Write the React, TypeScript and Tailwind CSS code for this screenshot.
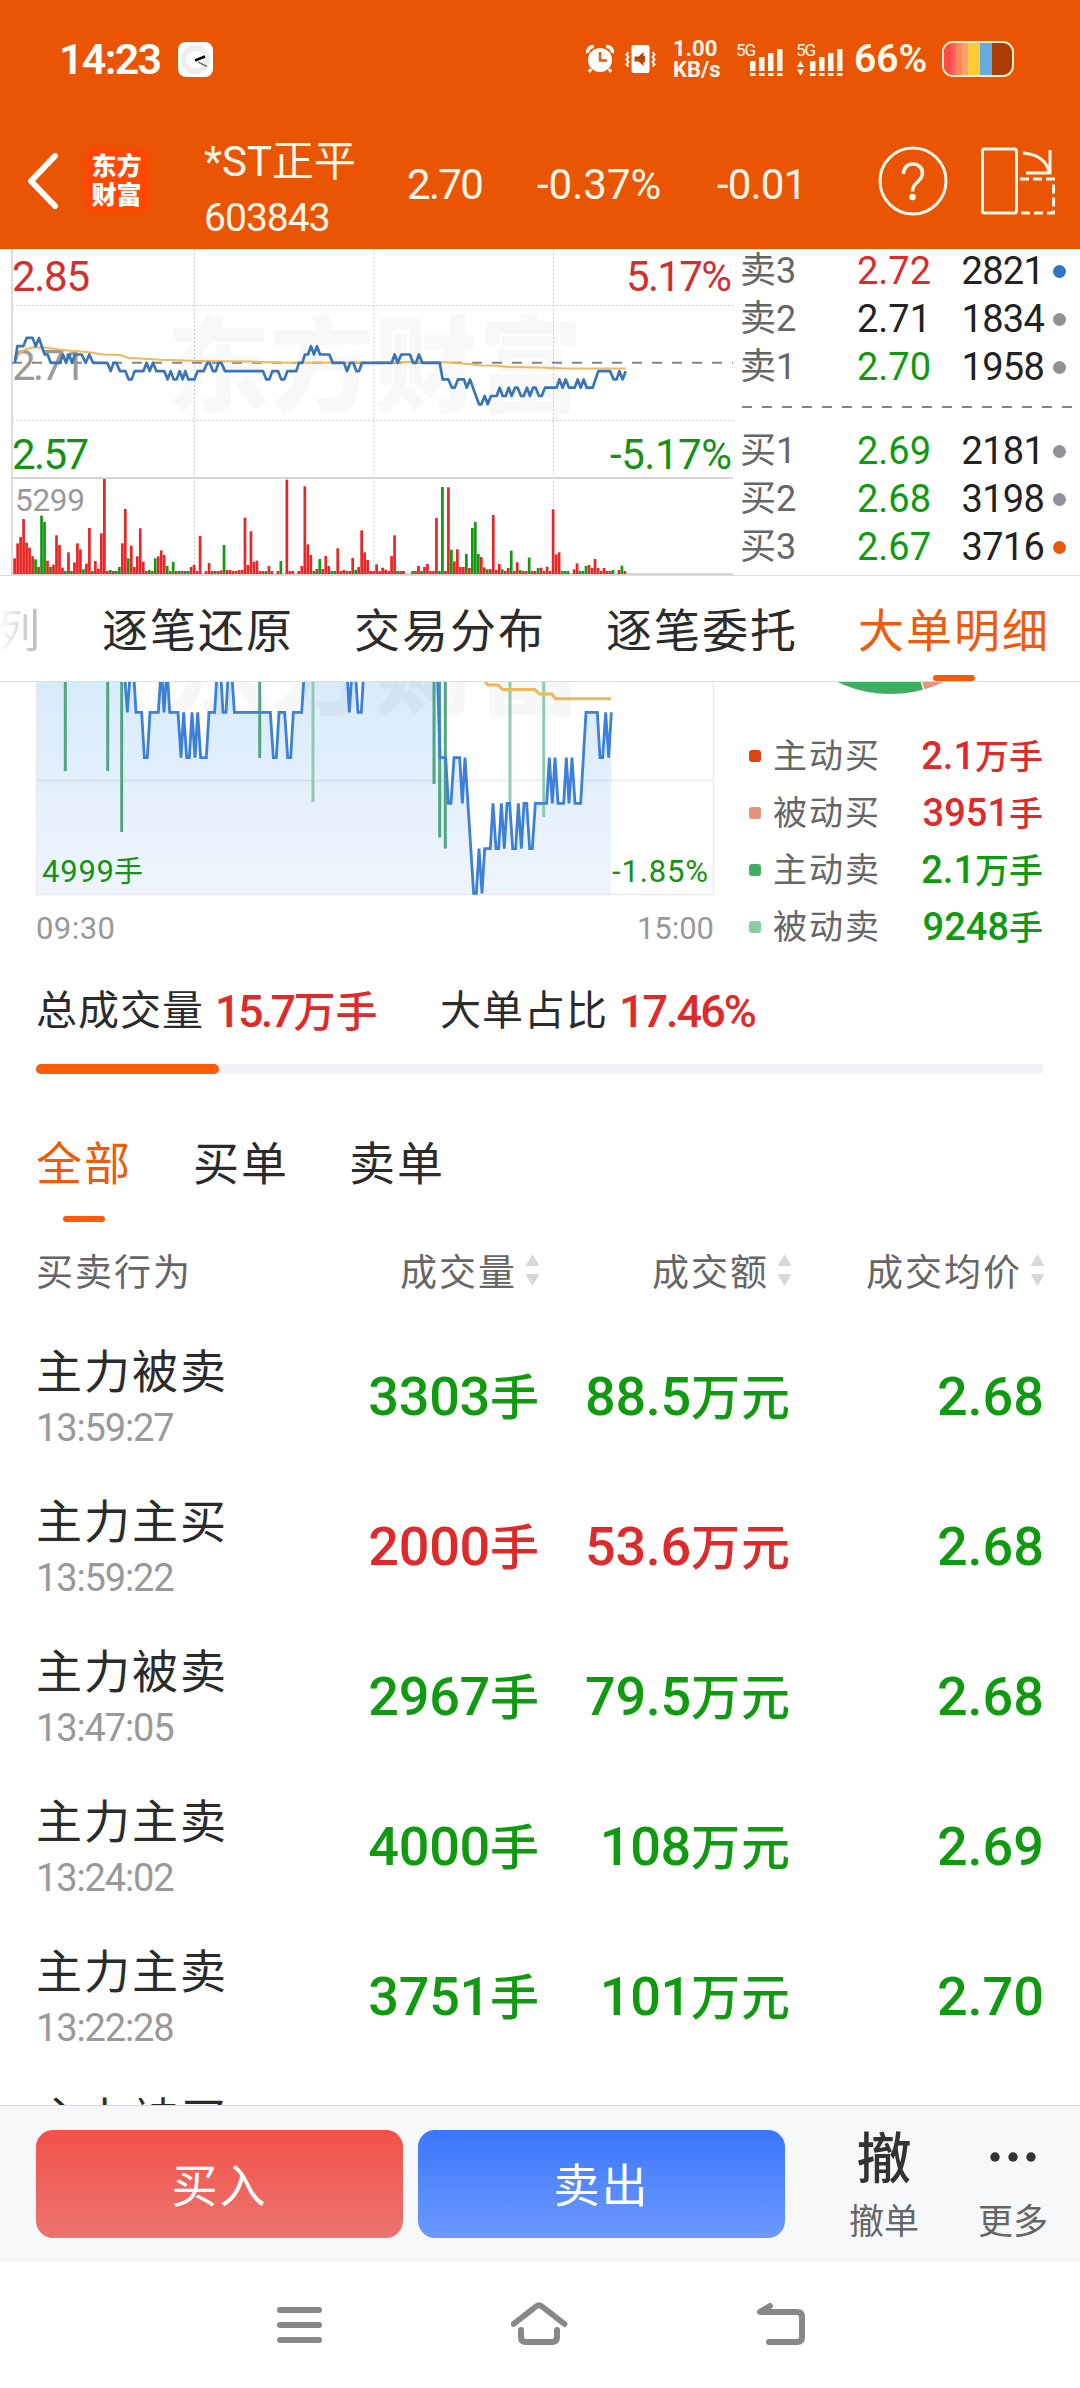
import { clsx } from 'clsx'

type Tone = 'up' | 'down' | 'flat'

const toneText: Record<Tone, string> = {
  up: 'text-[#de2a2a]',
  down: 'text-[#0f9a0f]',
  flat: 'text-[#222]',
}

interface Quote {
  label: string
  price: string
  volume: string
  tone: Tone
  dot: string
}

const asks: Quote[] = [
  { label: '卖3', price: '2.72', volume: '2821', tone: 'up', dot: 'bg-[#3573c0]' },
  { label: '卖2', price: '2.71', volume: '1834', tone: 'flat', dot: 'bg-[#919197]' },
  { label: '卖1', price: '2.70', volume: '1958', tone: 'down', dot: 'bg-[#919197]' },
]

const bids: Quote[] = [
  { label: '买1', price: '2.69', volume: '2181', tone: 'down', dot: 'bg-[#919197]' },
  { label: '买2', price: '2.68', volume: '3198', tone: 'down', dot: 'bg-[#919197]' },
  { label: '买3', price: '2.67', volume: '3716', tone: 'down', dot: 'bg-[#e85a0c]' },
]

const legend = [
  { label: '主动买', value: '2.1', unit: '万手', tone: 'up' as Tone, dot: 'bg-[#df4415]' },
  { label: '被动买', value: '3951', unit: '手', tone: 'up' as Tone, dot: 'bg-[#e9917a]' },
  { label: '主动卖', value: '2.1', unit: '万手', tone: 'down' as Tone, dot: 'bg-[#40ae63]' },
  { label: '被动卖', value: '9248', unit: '手', tone: 'down' as Tone, dot: 'bg-[#8bcda3]' },
]

const orders = [
  { name: '主力被卖', time: '13:59:27', volume: '3303', amount: '88.5', price: '2.68', tone: 'down' as Tone },
  { name: '主力主买', time: '13:59:22', volume: '2000', amount: '53.6', price: '2.68', tone: 'up' as Tone },
  { name: '主力被卖', time: '13:47:05', volume: '2967', amount: '79.5', price: '2.68', tone: 'down' as Tone },
  { name: '主力主卖', time: '13:24:02', volume: '4000', amount: '108', price: '2.69', tone: 'down' as Tone },
  { name: '主力主卖', time: '13:22:28', volume: '3751', amount: '101', price: '2.70', tone: 'down' as Tone },
]

// x in thirds of a pixel, level in ticks of 0.01 from the previous close
const priceTicks =
  '45,0 52,2 70,2 80,3 98,3 107,2 117,3 125,2 134,1 143,1 152,0 180,0 189,1 198,0 207,1 216,0 225,1 245,1 257,0 268,1 279,0 322,0 332,-1 341,0 349,0 360,-1 376,-1 386,-2 395,-2 404,-1 430,-1 440,0 449,-1 459,0 469,-1 493,-1 503,-2 512,-1 521,-2 530,-2 539,-1 548,-2 556,-1 565,-2 583,-2 593,-1 611,-1 622,0 629,0 639,-1 647,-1 656,0 664,0 675,-1 789,-1 799,-2 808,-2 817,-1 834,-1 844,-2 853,-2 862,-1 889,-1 897,0 907,0 915,1 924,1 933,2 942,1 951,2 960,1 988,1 998,0 1032,0 1041,-1 1051,0 1060,0 1069,-1 1077,-1 1086,0 1175,0 1184,1 1193,0 1204,1 1230,1 1239,0 1248,0 1257,1 1267,0 1319,0 1328,-2 1345,-2 1356,-3 1364,-3 1374,-2 1392,-2 1400,-3 1410,-2 1437,-5 1444,-5 1454,-4 1463,-5 1473,-4 1490,-4 1499,-3 1508,-4 1517,-4 1526,-3 1535,-4 1545,-3 1553,-3 1563,-4 1571,-4 1581,-3 1590,-4 1599,-3 1607,-3 1617,-4 1625,-4 1635,-3 1670,-3 1678,-2 1688,-3 1697,-2 1707,-3 1724,-3 1733,-2 1742,-3 1751,-2 1760,-3 1778,-3 1795,-1 1830,-1 1841,-2 1850,-2 1858,-1 1868,-2 1877,-1'

const pricePoints = priceTicks
  .split(' ')
  .map(p => {
    const [x, level] = p.split(',').map(Number)
    return `${x / 3},${362.8 - level * 8.3}`
  })
  .join(' ')

const averagePoints =
  '15,360 20,353 25,349.5 33,347.3 47,347.7 67,350.5 87,352 103,354.5 120,355 128,357.8 160,359.7 200,361 248,361.5 287,362.7 370,362.5 413,362 442,362 457,363.3 470,364 480,365.4 498,365.7 507,367 540,367.4 567,368.6 626,368.6'

// one entry per minute: bar height and colour
const volumeBars =
  '47r 92r 111r 165r 94r 79r 53r 44g 21r 175g 156g 40r 21g 28r 116r 87r 19r 9g 65r 9g 35r 92r 74r 14g 31r 138r 9g 39r 16r 122r 285r 9r 12g 9r 9g 21g 92r 195r 47g 85r 21r 53r 137r 37r 9r 12g 9r 47g 53r 71r 57r 24g 9r 36g 9r 9g 9r 9g 9g 21r 28r 9r 114r 0r 9r 33r 9r 9g 9r 11r 87g 12r 12r 9r 9r 12r 12r 169r 27r 128r 37r 40r 9r 9r 9g 24r 9r 0r 9r 39g 0r 283r 9r 9r 0r 9r 24r 263r 89r 57r 9g 15r 45g 15r 54r 24r 9g 9g 77r 9r 12r 9g 9r 48r 12g 21r 131r 65r 42r 9r 9r 29r 9r 19r 13r 9r 54r 116r 9g 9r 9r 0r 0r 9g 9r 24r 9g 21r 30r 9r 9r 168r 9g 261g 9r 260r 73g 38r 74r 21r 21r 60g 18r 138g 156g 60g 51r 20r 14g 15r 177r 12r 30r 14g 9r 18r 70g 9r 35r 12g 9r 9r 49g 9r 9r 18g 19r 9r 22r 9r 194r 59r 65r 9g 9g 9g 0r 14r 32r 9g 9g 24g 27r 18r 45r 18r 9r 18r 9r 9r 12g 0r 12r 25g 9r'

const bars = volumeBars.split(' ').map((b, i) => ({
  x: (44 + i * 8.975) / 3,
  h: parseInt(b, 10) / 3,
  color: b.endsWith('g') ? '#0f9a0f' : '#ea2525',
}))

// lower chart, same x unit, y in thirds of a pixel below 570
const bigOrderTicks =
  '110,150 340,150 372,290 382,427 392,290 400,290 408,427 425,427 433,563 442,563 450,427 475,427 484,290 492,427 501,290 509,427 534,427 543,563 551,427 560,563 568,563 576,427 585,563 593,427 602,563 619,563 627,427 644,427 652,290 661,290 669,427 678,427 686,290 694,290 703,427 811,427 820,563 829,563 837,427 854,427 863,563 872,563 880,427 905,427 914,290 925,150 1020,150 1040,290 1048,427 1057,290 1065,290 1074,427 1084,427 1092,290 1110,150 1290,150 1312,290 1320,563 1337,563 1345,700 1353,700 1362,563 1379,563 1387,700 1395,563 1421,970 1429,970 1437,836 1446,970 1454,836 1471,836 1479,700 1488,836 1496,836 1504,700 1513,836 1521,700 1529,700 1538,836 1547,836 1555,700 1564,836 1572,700 1580,700 1589,836 1597,836 1606,700 1640,700 1648,563 1657,700 1665,563 1674,700 1691,700 1699,563 1707,700 1716,563 1725,700 1742,700 1758,427 1792,427 1800,563 1808,563 1817,427 1826,563 1834,427'

const bigOrderPoints = bigOrderTicks
  .split(' ')
  .map(p => {
    const [x, y] = p.split(',').map(Number)
    return `${x / 3},${570 + y / 3}`
  })
  .join(' ')

const sellMarks = [
  { x: 65.3, y: 771, light: false },
  { x: 107.7, y: 771, light: false },
  { x: 121.7, y: 832, light: false },
  { x: 259.7, y: 758, light: false },
  { x: 313, y: 802, light: true },
  { x: 434, y: 784, light: false },
  { x: 439.7, y: 837.5, light: false },
  { x: 445.3, y: 848.5, light: false },
  { x: 510, y: 803, light: true },
  { x: 543.7, y: 817, light: true },
]

function Signal({ data }: { data?: boolean }) {
  return (
    <svg width="48" height="36" viewBox="0 0 48 36" fill="#fff8ea" className="shrink-0">
      <text x="0" y="15" fontSize="17" fontFamily="Roboto" letterSpacing="-1">5G</text>
      {data && <path d="M1 26l3.500-6 3.500 6zM1 28.500l3.500 6 3.500-6z" />}
      {[0, 1, 2, 3].map(i => (
        <g key={i}>
          <rect x={14 + i * 9} y={20 - i * 4} width="5.500" height={10 + i * 4} />
          <rect x={14 + i * 9} y="32" width="5.500" height="3" />
        </g>
      ))}
    </svg>
  )
}

function Header() {
  return (
    <header className="h-[249px] shrink-0 bg-[#e95503] text-[#fff8ea]">
      {/* Status bar */}
      <div className="flex h-[118px] items-center pl-[59px]">
        <div className="w-[119px] text-[43px] leading-none font-semibold tracking-[-0.04em] text-white">14:23</div>
        <svg width="35" height="35" viewBox="0 0 35 35">
          <rect width="35" height="35" rx="8" fill="#fff" />
          <circle cx="17.500" cy="17.500" r="14.500" fill="#ededed" />
          <circle cx="17.500" cy="17.500" r="9" fill="#fff" />
          <path d="M17 18.500L27 14.500" stroke="#000" strokeWidth="2.500" />
          <path d="M20 20l9 4.500" stroke="#777" strokeWidth="1.500" />
        </svg>
        <svg width="28" height="28" viewBox="0 0 28 28" className="ml-[373px]">
          <circle cx="14" cy="15" r="12" fill="#fff" />
          <path d="M1.500 8A6 6 0 0 1 8 1.500M26.500 8A6 6 0 0 0 20 1.500" stroke="#fff" strokeWidth="3.500" fill="none" />
          <path d="M5 24l-2 3M23 24l2 3" stroke="#fff" strokeWidth="3" />
          <path d="M14 7v8.500h7" stroke="#e95503" strokeWidth="2.500" fill="none" />
        </svg>
        <svg width="31" height="28" viewBox="0 0 31 28" className="ml-[11px]">
          <rect x="6.500" width="18" height="28" rx="2" fill="#fff" />
          <path d="M9.500 11.500h4l5-4.500v14l-5-4.500h-4z" fill="#b84300" />
          <path d="M17 11h3v6h-3z" fill="#b84300" />
          <path d="M3.500 7l-2 2.500 2 2.500-2 2.500 2 2.500-2 2.500 2 2M27.500 7l2 2.500-2 2.500 2 2.500-2 2.500 2 2.500-2 2" stroke="#fff" strokeWidth="2" fill="none" />
        </svg>
        <div className="ml-[17px] w-[63px] text-[22px] leading-[21px] font-bold text-[#fff8ea]">
          <div>1.00</div>
          <div>KB/s</div>
        </div>
        <Signal />
        <div className="w-3" />
        <Signal data />
        <div className="ml-2.5 w-[88px] text-[39px] leading-none font-semibold">66%</div>
        <div className="flex h-9 w-[72px] overflow-hidden rounded-[11px] border-2 border-[#ffeccd] bg-[#ab3d02]">
          <div className="w-[7px] bg-[#ff4a4a]" />
          <div className="w-[5px] bg-[#ff5f65]" />
          <div className="w-1.5 bg-[#ff8a56]" />
          <div className="w-1.5 bg-[#ffa070]" />
          <div className="w-3 bg-[#fdcb38]" />
          <div className="w-3 bg-[#64ace0]" />
        </div>
      </div>

      {/* Stock title */}
      <div className="flex h-[131px] items-center pb-1.5 pl-7">
        <svg width="30" height="56" viewBox="0 0 30 56" className="shrink-0">
          <path d="M27 3L3 28l24 25" fill="none" stroke="#fff" strokeWidth="6" strokeLinecap="round" strokeLinejoin="round" />
        </svg>
        <div className="ml-[25px] flex h-[67px] w-[67px] shrink-0 flex-col items-center justify-center rounded-[14px] bg-[#ff4800] text-[25px] leading-[29px] font-black text-white">
          <div>东方</div>
          <div>财富</div>
        </div>
        <div className="ml-[54px] w-[203px] pt-[18px] whitespace-nowrap">
          <div className="text-[42px] leading-[57px]">*ST正平</div>
          <div className="text-[39px] leading-[57px] tracking-[-0.025em]">603843</div>
        </div>
        <div className="w-[130px] pt-2 text-[42px] leading-none tracking-[-0.04em]">2.70</div>
        <div className="w-[180px] pt-2 text-[42px] leading-none">-0.37%</div>
        <div className="w-[161px] pt-2 text-[42px] leading-none tracking-[-0.02em]">-0.01</div>
        <svg width="70" height="70" viewBox="0 0 70 70" className="shrink-0">
          <circle cx="35" cy="35" r="33" fill="none" stroke="#fff8ea" strokeWidth="3" />
          <path d="M25.500 28c0-6 4-10 9.500-10s9.500 4 9.500 9c0 4.500-2.500 6.500-5.500 9.500-3 2.500-4.500 4.500-4.500 9" fill="none" stroke="#fff8ea" strokeWidth="3.500" />
          <circle cx="34.500" cy="51" r="3.300" fill="#fff8ea" />
        </svg>
        <svg width="74" height="68" viewBox="0 0 74 68" fill="none" stroke="#fff8ea" strokeWidth="3" className="ml-[33px] shrink-0">
          <rect x="1.500" y="2" width="34" height="64" rx="2" />
          <path d="M42 6c15 1 25 9 26 20" />
          <path d="M69 3v23H45" />
          <path d="M39 32h33.500v34H39" strokeDasharray="9 4" />
        </svg>
      </div>
    </header>
  )
}

function MinuteChart() {
  return (
    <svg width="740" height="326" viewBox="0 249 740 326" className="shrink-0" fontFamily="Roboto, 'Noto Sans CJK SC', sans-serif">
      <text x="166" y="404" fontSize="104" fontWeight="900" fill="#f8f8f8" fontFamily="'Noto Sans CJK SC'">东方财富</text>
      <path d="M12 305.500H733M12 420.500H733M194.500 249V574M374 249V574M553.500 249V574" stroke="#ccc" strokeWidth="1" strokeDasharray="2 2" />
      <path d="M12 249V575" stroke="#ddd" strokeWidth="2" />
      <path d="M12 478H733M12 574H733" stroke="#d5d5d5" strokeWidth="2" />
      <path d="M12 362.800H733" stroke="#858585" strokeWidth="2" strokeDasharray="10 10" />
      <text x="12" y="380" fontSize="42" fill="#999" textLength="74">2.71</text>
      <polyline points={averagePoints} fill="none" stroke="#f0b95c" strokeWidth="2" />
      <polyline points={pricePoints} fill="none" stroke="#3a74b8" strokeWidth="2.700" strokeLinejoin="round" />
      {bars.map((b, i) => (
        <rect key={i} x={b.x - 1.4} y={574 - b.h} width="2.700" height={b.h} fill={b.color} />
      ))}
      <text x="12" y="291" fontSize="42" fill="#cf3030" textLength="78">2.85</text>
      <text x="12" y="469" fontSize="42" fill="#149214" textLength="77">2.57</text>
      <text x="15" y="511" fontSize="31.500" fill="#999" textLength="70">5299</text>
      <text x="626" y="291" fontSize="42" fill="#cf3030" textLength="106">5.17%</text>
      <text x="610" y="469" fontSize="42" fill="#149214" textLength="122">-5.17%</text>
    </svg>
  )
}

function QuoteRow({ quote }: { quote: Quote }) {
  return (
    <div className="flex h-12 items-center leading-none">
      <div className="w-[80px] text-[36px] text-[#666]">{quote.label}</div>
      <div className={clsx('w-[111px] text-right text-[38px]', toneText[quote.tone])}>{quote.price}</div>
      <div className="w-[113px] text-right text-[38px] tracking-[-0.02em] text-[#222]">{quote.volume}</div>
      <div className={clsx('ml-[9px] h-[13px] w-[13px] rounded-full', quote.dot)} />
    </div>
  )
}

function OrderBook() {
  return (
    <div className="-mt-[2px] flex-1">
      {asks.map(q => (
        <QuoteRow key={q.label} quote={q} />
      ))}
      <svg width="332" height="36" viewBox="0 0 332 36" className="block">
        <path d="M2 16H332" stroke="#858585" strokeWidth="2" strokeDasharray="10 10" />
      </svg>
      {bids.map(q => (
        <QuoteRow key={q.label} quote={q} />
      ))}
    </div>
  )
}

function SectionTabs() {
  return (
    <nav className="flex h-[107px] shrink-0 items-center border-t border-b border-[#dedede] pt-1 text-[46px] leading-none tracking-[2px] whitespace-nowrap text-[#2b2b2b]">
      <div className="-ml-1.5 w-[108px] bg-gradient-to-r from-white from-5% to-[#bbb] to-40% bg-clip-text text-transparent">列</div>
      <div className="w-[252px]">逐笔还原</div>
      <div className="w-[252px]">交易分布</div>
      <div className="w-[252px]">逐笔委托</div>
      <div className="relative flex h-full items-center text-[#ee5b0c]">
        大单明细
        <div className="absolute bottom-0 left-[75px] h-1.5 w-[42px] rounded-full bg-[#f45a0c]" />
      </div>
    </nav>
  )
}

function BigOrderChart() {
  return (
    <svg width="718" height="265" viewBox="0 682 718 265" className="shrink-0" fontFamily="Roboto, 'Noto Sans CJK SC', sans-serif">
      <defs>
        <linearGradient id="area" gradientUnits="userSpaceOnUse" x1="0" y1="682" x2="0" y2="894">
          <stop offset="0" stopColor="#d8ebfb" />
          <stop offset="1" stopColor="#eff5fe" />
        </linearGradient>
      </defs>
      <polygon points={`${bigOrderPoints} 611,894 37,894`} fill="url(#area)" />
      <path d="M36 780.500H713" stroke="#000" strokeOpacity=".07" strokeWidth="2" />
      <text x="166" y="707" fontSize="104" fontWeight="900" fillOpacity=".03" fontFamily="'Noto Sans CJK SC'">东方财富</text>
      <path d="M36.500 682V894.500H713.500V682" fill="none" stroke="#e9ebef" strokeWidth="1.500" />
      {sellMarks.map(m => (
        <path key={m.x} d={`M${m.x} 682V${m.y}`} stroke={m.light ? '#90cbb0' : '#4fa67f'} strokeWidth="3" />
      ))}
      <polyline points="485,682 488,685 498,685 502.700,689.500 535,689.500 539.300,694 551.700,694 555.700,698.700 611,698.700" fill="none" stroke="#edb855" strokeWidth="3" />
      <polyline points={bigOrderPoints} fill="none" stroke="#3c80d8" strokeWidth="2.800" />
      <text x="42" y="882" fontSize="31" fill="#149214" textLength="72">4999</text>
      <text x="114" y="882" fontSize="29" fill="#149214">手</text>
      <text x="612" y="882" fontSize="31" fill="#149214" textLength="96">-1.85%</text>
      <text x="36" y="939" fontSize="31" fill="#999" textLength="79">09:30</text>
      <text x="637" y="939" fontSize="31" fill="#999" textLength="77">15:00</text>
    </svg>
  )
}

function Distribution() {
  return (
    <div className="flex-1">
      <svg width="360" height="45" viewBox="718 682 360 45" className="block">
        <circle cx="890.500" cy="571" r="123" fill="#3fae63" />
        <path d="M890.500 571L923 690 960 720 1020 660z" fill="#fff" />
        <path d="M924.500 689.300A123 123 0 0 0 960 672.500L919 672z" fill="#e8937c" />
      </svg>
      {legend.map(item => (
        <div key={item.label} className="flex h-[57px] items-center pl-[31px] leading-none">
          <div className={clsx('h-3 w-3 rounded-[3px]', item.dot)} />
          <div className="ml-3 w-[111px] text-[34px] tracking-[2px] text-[#666]">{item.label}</div>
          <div className={clsx('flex w-[159px] items-baseline justify-end font-medium', toneText[item.tone])}>
            <span className="text-[38px]">{item.value}</span>
            <span className="text-[34px]">{item.unit}</span>
          </div>
        </div>
      ))}
    </div>
  )
}

function Summary() {
  return (
    <div className="px-9">
      <div className="flex h-[122px] items-center pt-1.5 text-[41px] leading-none tracking-[1px] whitespace-nowrap text-[#2b2b2b]">
        <div className="w-[179px]">总成交量</div>
        <div className="flex w-[225px] items-baseline font-medium text-[#de2a2a]">
          <span className="text-[45px] tracking-[-0.06em]">15.7</span>
          <span className="text-[42px] tracking-normal">万手</span>
        </div>
        <div className="w-[179px]">大单占比</div>
        <div className="text-[45px] font-medium tracking-[-0.045em] text-[#de2a2a]">17.46%</div>
      </div>
      <div className="-mt-[5px] h-[10px] rounded-full bg-[#f2f2f4]">
        <div className="h-full w-[183px] rounded-full bg-[#ff5a05]" />
      </div>
    </div>
  )
}

function OrderTabs() {
  return (
    <div className="mt-11 flex h-[104px] pl-9 text-[46px] leading-[92px] tracking-[2px] text-[#2b2b2b]">
      <div className="relative w-[157px] text-[#ee5b0c]">
        全部
        <div className="absolute bottom-0 left-[27px] h-1.5 w-[42px] rounded-full bg-[#ff5a05]" />
      </div>
      <div className="w-[156px]">买单</div>
      <div>卖单</div>
    </div>
  )
}

function SortHeader({ label }: { label: string }) {
  return (
    <div className="flex items-center justify-end">
      {label}
      <svg width="13" height="32" viewBox="0 0 13 32" fill="#d8d8d8" className="-mt-1.5 ml-[9px]">
        <path d="M6.500 0L13 11Q13 12 12 12H1Q0 12 0 11zM6.500 32L13 21Q13 20 12 20H1Q0 20 0 21z" />
      </svg>
    </div>
  )
}

function OrderTable() {
  return (
    <div className="px-9">
      <div className="grid h-[98px] grid-cols-[251px_252px_252px_253px] items-center pt-1 text-[37px] leading-none tracking-[2px] whitespace-nowrap text-[#666]">
        <div>买卖行为</div>
        <SortHeader label="成交量" />
        <SortHeader label="成交额" />
        <SortHeader label="成交均价" />
      </div>
      {orders.map(order => (
        <div key={order.time} className="grid h-[150px] grid-cols-[251px_252px_252px_253px] items-center leading-none whitespace-nowrap">
          <div className="pt-2">
            <div className="text-[46px] leading-[58px] tracking-[2px] text-[#2b2b2b]">{order.name}</div>
            <div className="text-[38px] leading-[54px] tracking-[-0.03em] text-[#999]">{order.time}</div>
          </div>
          <div className={clsx('flex items-baseline justify-end pt-[3px] font-medium', toneText[order.tone])}>
            <span className="text-[54px] tracking-[-0.005em]">{order.volume}</span>
            <span className="text-[49px]">手</span>
          </div>
          <div className={clsx('flex items-baseline justify-end pt-[3px] font-medium', toneText[order.tone])}>
            <span className="text-[54px] tracking-[-0.005em]">{order.amount}</span>
            <span className="text-[49px] tracking-[1px]">万元</span>
          </div>
          <div className="pt-[3px] text-right text-[54px] font-medium text-[#0f9a0f]">{order.price}</div>
        </div>
      ))}
      <div className="pt-[21px] text-[46px] leading-[58px] tracking-[2px] text-[#2b2b2b]">主力被买</div>
    </div>
  )
}

function TradeBar() {
  return (
    <footer className="flex h-[157px] shrink-0 items-center border-t border-[#d5d8dc] bg-[#f7f8fa] pl-9 leading-none">
      <button className="h-[108px] w-[367px] rounded-[17px] bg-gradient-to-b from-[#f3504a] to-[#eb746f] pt-[3px] text-[46px] tracking-[2px] text-white">买入</button>
      <button className="ml-[15px] h-[108px] w-[367px] rounded-[17px] bg-gradient-to-b from-[#3a76fa] to-[#6d99ff] pt-[3px] text-[46px] tracking-[2px] text-white">卖出</button>
      <div className="ml-[49px] flex h-[112px] w-[100px] flex-col items-center justify-between pt-1 text-[#333]">
        <div className="text-[55px] font-medium">撤</div>
        <div className="text-[35px] text-[#666]">撤单</div>
      </div>
      <div className="ml-[29px] flex h-[112px] w-[100px] flex-col items-center justify-between pt-[2px]">
        <svg width="46" height="55" viewBox="0 0 46 55" fill="#333">
          <circle cx="5" cy="27" r="4.700" />
          <circle cx="23" cy="27" r="4.700" />
          <circle cx="41" cy="27" r="4.700" />
        </svg>
        <div className="text-[35px] text-[#666]">更多</div>
      </div>
    </footer>
  )
}

function SystemNav() {
  return (
    <div className="flex h-[126px] shrink-0 items-center justify-center gap-[186px] bg-white">
      <svg width="54" height="44" viewBox="273 2303 54 44" stroke="#888" strokeWidth="6" strokeLinecap="round">
        <path d="M282 2310H321M282 2325H321M282 2340H321" />
      </svg>
      <svg width="58" height="46" viewBox="512 2300 58 46" fill="none" stroke="#888" strokeWidth="6" strokeLinecap="round" strokeLinejoin="round">
        <path d="M514.500 2322L537 2304.500Q540 2302 543 2304.500L565.500 2322" />
        <path d="M522 2328V2335Q522 2340 527 2340H553Q558 2340 558 2335V2328" />
      </svg>
      <svg width="54" height="46" viewBox="754 2300 54 46" fill="none" stroke="#888" strokeWidth="6" strokeLinecap="round" strokeLinejoin="round">
        <path d="M769 2304L759 2310H796Q801 2310 801 2315V2335Q801 2340 796 2340H768" />
      </svg>
    </div>
  )
}

export default function App() {
  return (
    <div className="flex h-[2388px] w-[1080px] flex-col overflow-hidden bg-white font-['Roboto','Noto_Sans_CJK_SC',sans-serif]">
      <Header />
      <div className="flex h-[326px] shrink-0">
        <MinuteChart />
        <OrderBook />
      </div>
      <SectionTabs />
      <main className="min-h-0 flex-1 overflow-hidden">
        <div className="flex h-[265px]">
          <BigOrderChart />
          <Distribution />
        </div>
        <Summary />
        <OrderTabs />
        <OrderTable />
      </main>
      <TradeBar />
      <SystemNav />
    </div>
  )
}
